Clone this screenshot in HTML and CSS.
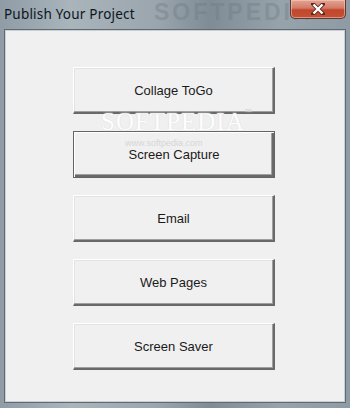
FILE: index.html
```html
<!DOCTYPE html>
<html lang="en">

<head>
    <meta charset="UTF-8">
    <meta name="viewport" content="width=device-width, initial-scale=1.0">
    <title>Publish Your Project</title>
    <link rel="stylesheet" href="styles.css">
</head>

<body>

    <div class="window">
        <!-- Title bar -->
        <div class="titlebar">
            <span class="title">Publish Your Project</span>
            <span class="watermark-top">SOFTPEDIA</span>
            <div class="close-btn">
                <svg width="14" height="12" viewBox="0 0 14 12">
                    <path d="M2 1 L12 11 M12 1 L2 11" stroke="#5a2a20" stroke-width="4" stroke-linecap="square" />
                    <path d="M2.5 1.5 L11.5 10.5 M11.5 1.5 L2.5 10.5" stroke="#ffffff" stroke-width="2.4" />
                </svg>
            </div>
        </div>

        <!-- Client area -->
        <div class="client">
            <div class="buttons">
                <button class="btn">Collage ToGo</button>
                <button class="btn focused">Screen Capture</button>
                <button class="btn">Email</button>
                <button class="btn">Web Pages</button>
                <button class="btn">Screen Saver</button>
            </div>
            <div class="watermark">SOFTPEDIA<sup>™</sup></div>
            <div class="watermark-url">www.softpedia.com</div>
        </div>
    </div>

</body>

</html>
```

FILE: styles.css
```css
body {
    margin: 0;
    padding: 0;
    background-color: #8d9ba6;
}

.window {
    width: 350px;
    height: 408px;
    box-sizing: border-box;
    padding: 0 4px 5px 4px;
    display: flex;
    flex-direction: column;
    background: linear-gradient(90deg, #8f9ca6 0%, #a9b4bb 20%, #9aa5ad 45%, #7f8c96 60%, #97a3ab 80%, #8e9ba5 100%);
    position: relative;
    overflow: hidden;
}

.titlebar {
    height: 29px;
    flex-shrink: 0;
    position: relative;
}

.title {
    position: absolute;
    left: 0;
    top: 5px;
    font-family: "Noto Sans", "Open Sans", sans-serif;
    font-size: 13.5px;
    letter-spacing: 0.2px;
    color: #0c1620;
    z-index: 2;
}

.watermark-top {
    position: absolute;
    left: 150px;
    top: 0;
    font-family: "Liberation Sans", sans-serif;
    font-weight: bold;
    font-size: 23px;
    line-height: 24px;
    letter-spacing: 3px;
    color: #6c7780;
    opacity: 0.35;
}

.close-btn {
    position: absolute;
    right: 0;
    top: 0;
    width: 56px;
    height: 19px;
    box-sizing: border-box;
    border: 1px solid #5e3a34;
    border-top: none;
    border-radius: 0 0 5px 5px;
    background: linear-gradient(180deg, #e4a594 0%, #d27a66 45%, #c1462c 55%, #c45135 100%);
    display: flex;
    align-items: center;
    justify-content: center;
    box-shadow: inset 0 0 0 1px rgba(255, 210, 200, 0.5);
    z-index: 3;
}

.client {
    flex: 1;
    background-color: #f0f0f0;
    border: 1px solid #5f6a72;
    box-shadow: inset 0 0 0 1px #c9cfd3;
    position: relative;
}

.buttons {
    display: flex;
    flex-direction: column;
    align-items: flex-start;
    gap: 17px;
    padding: 37px 0 0 68px;
}

.btn {
    width: 202px;
    height: 47px;
    box-sizing: border-box;
    background-color: #f0f0f0;
    font-family: "Liberation Sans", Arial, sans-serif;
    font-size: 13px;
    font-weight: normal;
    color: #1a1a1a;
    padding: 0;
    border-style: solid;
    border-width: 1px 2px 2px 1px;
    border-color: #ffffff #696969 #696969 #ffffff;
    box-shadow: inset -1px -1px 0 #a0a0a0, inset 1px 1px 0 #e3e3e3;
    position: relative;
    z-index: 1;
}

.btn.focused {
    border: 1px solid #646464;
    box-shadow: inset 1px 1px 0 #ffffff, inset -2px -2px 0 #696969, inset -3px -3px 0 #a0a0a0;
}

.watermark {
    position: absolute;
    left: 96px;
    top: 78px;
    font-family: "Liberation Serif", serif;
    font-size: 25px;
    letter-spacing: 1px;
    color: #ffffff;
    opacity: 0.9;
    z-index: 2;
    text-shadow: 0 0 1px #dcdcdc, 0 0 2px #e4e4e4;
    pointer-events: none;
}

.watermark sup {
    font-size: 7px;
    vertical-align: top;
    color: #d0d0d0;
}

.watermark-url {
    position: absolute;
    left: 120px;
    top: 108px;
    font-family: "Liberation Sans", sans-serif;
    font-size: 9px;
    color: #d6d6d6;
    z-index: 2;
}
```
